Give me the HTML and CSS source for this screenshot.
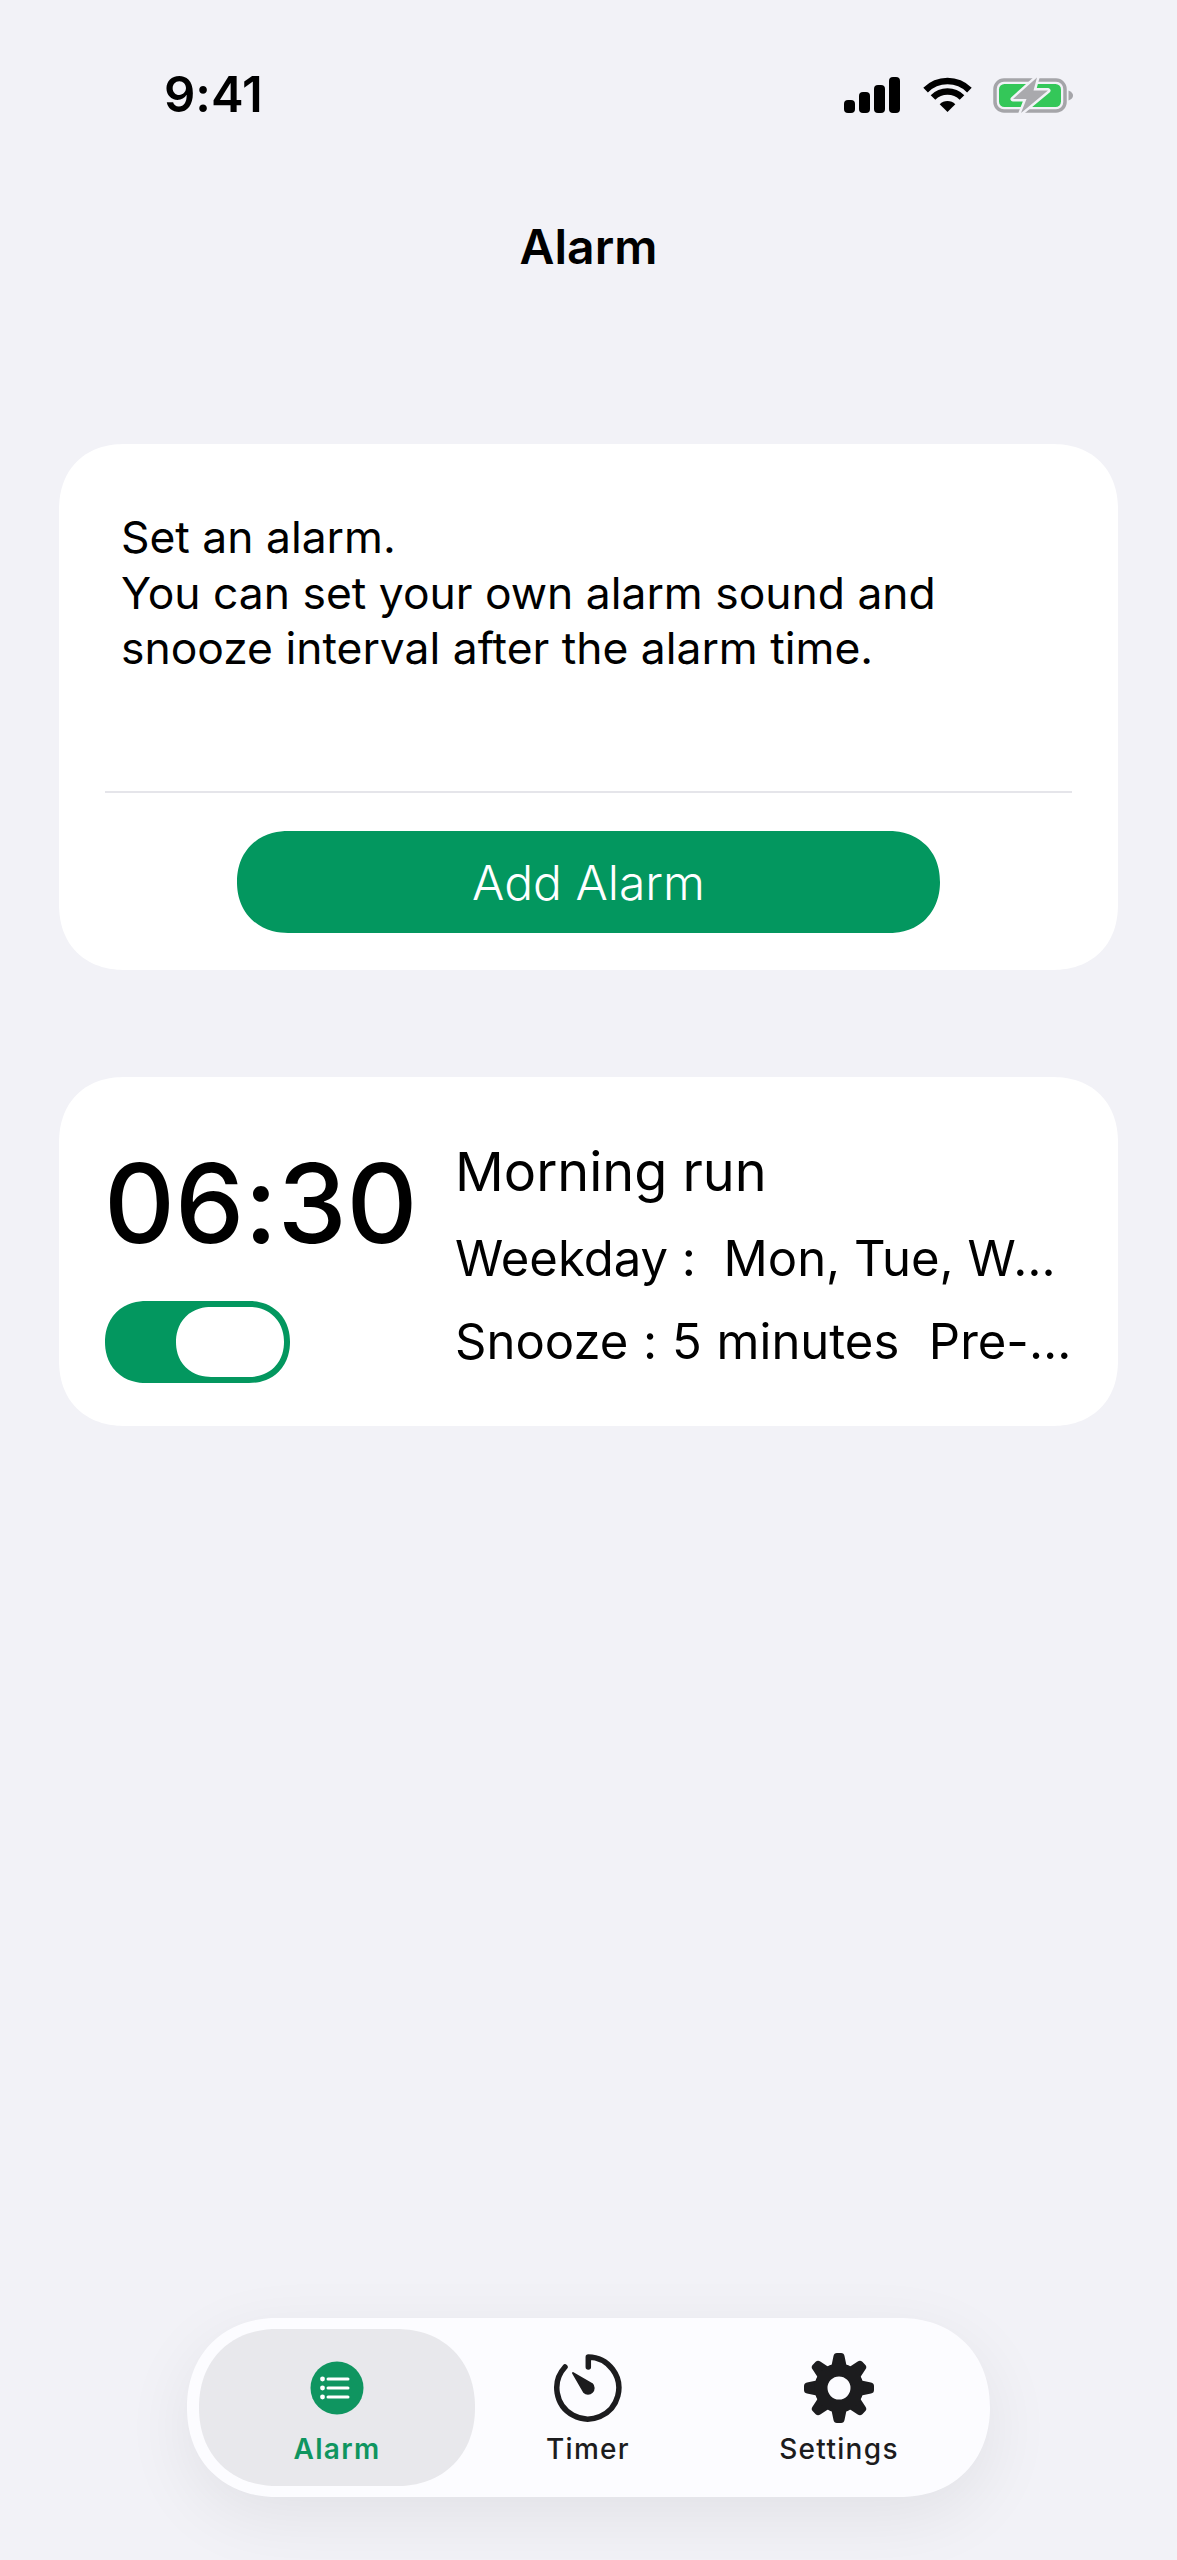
FILE: index.html
```html
<!DOCTYPE html>
<html>

<head>
  <title>Alarm</title>
  <link rel="stylesheet" href="styles.css">
</head>

<body>
  <div class="status-bar">
    <span class="status-time">9:41</span>
    <div class="status-icons">
      <svg class="icon-signal" viewBox="0 0 56 36">
        <rect x="0" y="23" width="11" height="13" rx="4"/>
        <rect x="15" y="15" width="11" height="21" rx="4"/>
        <rect x="30" y="8" width="11" height="28" rx="4"/>
        <rect x="45" y="0" width="11" height="36" rx="4"/>
      </svg>
      <svg class="icon-wifi" viewBox="0 0 49 36">
        <path class="wifi-arc" d="M2.6 13.1A31 31 0 0 1 46.4 13.1"/>
        <path class="wifi-arc" d="M10 20.5A20.5 20.5 0 0 1 39 20.5"/>
        <path d="M24.5 35L16.7 27.2A11 11 0 0 1 32.3 27.2Z"/>
      </svg>
      <svg class="icon-battery" viewBox="0 0 80 38">
        <rect class="batt-shell" x="2" y="4" width="70" height="31" rx="9"/>
        <rect class="batt-fill" x="6" y="8" width="62" height="23" rx="5.5"/>
        <path class="batt-nub" d="M75.5 14.5C78.5 15.5 80 17.5 80 19.5S78.5 23.5 75.5 24.5Z"/>
        <path class="batt-bolt" d="M44 1.5L20 23H33.5L28 37L55 14.5H40.5Z"/>
      </svg>
    </div>
  </div>

  <h1 class="page-title">Alarm</h1>

  <section class="card intro-card">
    <p class="intro-text">Set an alarm.<br>You can set your own alarm sound and<br>snooze interval after the alarm time.</p>
    <div class="divider"></div>
    <button class="add-btn">Add Alarm</button>
  </section>

  <section class="card alarm-card">
    <div class="alarm-left">
      <div class="alarm-time">06:30</div>
      <div class="toggle"><div class="toggle-knob"></div></div>
    </div>
    <div class="alarm-info">
      <div class="alarm-name">Morning run</div>
      <div class="alarm-line">Weekday :  Mon, Tue, Wed, Thu, Fri</div>
      <div class="alarm-line snooze-line">Snooze : 5 minutes  Pre-alarm : On</div>
    </div>
  </section>

  <nav class="tab-bar">
    <div class="tab-item active">
      <svg class="tab-icon" viewBox="0 0 70 70">
        <circle cx="35" cy="35" r="26.5" fill="#0f9560"/>
        <g stroke="#fff" stroke-width="3" stroke-linecap="round">
          <path d="M26 26H46"/>
          <path d="M26 35H46"/>
          <path d="M26 44H46"/>
        </g>
        <g fill="#fff">
          <circle cx="20.5" cy="26" r="2.4"/>
          <circle cx="20.5" cy="35" r="2.4"/>
          <circle cx="20.5" cy="44" r="2.4"/>
        </g>
      </svg>
      <span>Alarm</span>
    </div>
    <div class="tab-item">
      <svg class="tab-icon" viewBox="0 0 70 70">
        <g transform="translate(1 1)">
          <path d="M34.3 13V3A31 31 0 1 1 11 13" fill="none" stroke="#1c1c1e" stroke-width="5.5" stroke-linecap="round" stroke-linejoin="round"/>
          <path d="M19 19L38 30A5.6 5.6 0 0 1 30 38Z" fill="#1c1c1e" stroke="#1c1c1e" stroke-width="2" stroke-linejoin="round"/>
        </g>
      </svg>
      <span>Timer</span>
    </div>
    <div class="tab-item">
      <svg class="tab-icon" viewBox="0 0 70 70">
        <defs>
          <path id="gearTooth" d="M27 15L29.5 3Q30 0 33 0H37Q40 0 40.5 3L43 15Z"/>
        </defs>
        <g fill="#1c1c1e">
          <use href="#gearTooth"/>
          <use href="#gearTooth" transform="rotate(45 35 35)"/>
          <use href="#gearTooth" transform="rotate(90 35 35)"/>
          <use href="#gearTooth" transform="rotate(135 35 35)"/>
          <use href="#gearTooth" transform="rotate(180 35 35)"/>
          <use href="#gearTooth" transform="rotate(225 35 35)"/>
          <use href="#gearTooth" transform="rotate(270 35 35)"/>
          <use href="#gearTooth" transform="rotate(315 35 35)"/>
        </g>
        <circle cx="35" cy="35" r="18" fill="none" stroke="#1c1c1e" stroke-width="13"/>
      </svg>
      <span>Settings</span>
    </div>
  </nav>
</body>

</html>
```

FILE: styles.css
```css
html,
body {
  margin: 0;
  padding: 0;
}

body {
  min-height: 2560px;
  display: flex;
  flex-direction: column;
  font-family: Inter, "Liberation Sans", sans-serif;
  font-feature-settings: "calt" 0;
  background-color: #f2f2f7;
  color: #000;
}

/* Status bar */
.status-bar {
  display: flex;
  justify-content: space-between;
  align-items: center;
  height: 36px;
  padding: 77px 104px 0 164px;
}

.status-time {
  font-size: 49px;
  font-weight: 600;
  line-height: 36px;
}

.status-icons {
  display: flex;
  align-items: center;
  gap: 21px;
}

.status-icons svg {
  display: block;
}

.icon-signal {
  width: 56px;
  height: 36px;
  margin-right: 2px;
}

.icon-wifi {
  width: 49px;
  height: 36px;
}

.icon-battery {
  width: 80px;
  height: 38px;
}

.wifi-arc {
  fill: none;
  stroke: #000;
  stroke-width: 6.5;
}

.batt-shell {
  fill: none;
  stroke: #a5a5a9;
  stroke-width: 3.5;
}

.batt-fill {
  fill: #34c759;
}

.batt-nub {
  fill: #a5a5a9;
}

.batt-bolt {
  fill: #a9a9ad;
  stroke: #f2f2f7;
  stroke-width: 5;
  stroke-linejoin: round;
  paint-order: stroke;
}

.page-title {
  margin: 95px 0 0;
  font-size: 48px;
  font-weight: 600;
  line-height: 78px;
  text-align: center;
}

/* Cards */
.card {
  background-color: #fff;
  border-radius: 66px;
  corner-shape: superellipse(1.15);
  margin: 0 59px;
}

.intro-card {
  height: 526px;
  margin-top: 158px;
  padding: 0 46px;
  display: flex;
  flex-direction: column;
  align-items: center;
  box-sizing: border-box;
}

.intro-text {
  align-self: stretch;
  height: 240px;
  margin: 0;
  padding: 66px 16px 0;
  box-sizing: border-box;
  font-size: 44.4px;
  line-height: 55.5px;
  color: #000;
}

.divider {
  align-self: stretch;
  height: 2px;
  margin-top: 107px;
  background-color: #e5e5ea;
}

.add-btn {
  width: 703px;
  height: 102px;
  margin-top: 38px;
  border: none;
  border-radius: 51px;
  corner-shape: superellipse(1.1);
  background-color: #03975f;
  color: #fff;
  font-family: inherit;
  font-feature-settings: inherit;
  font-size: 48px;
  font-weight: 300;
}

.alarm-card {
  height: 349px;
  margin-top: 107px;
  padding: 0 46px;
  display: flex;
  box-sizing: border-box;
}

.alarm-left {
  width: 350px;
  flex-shrink: 0;
}

.alarm-time {
  margin-top: 66px;
  margin-left: -1px;
  font-size: 110px;
  line-height: 120px;
  font-weight: 500;
}

.toggle {
  width: 185px;
  height: 82px;
  margin-top: 38px;
  padding: 6px;
  box-sizing: border-box;
  border-radius: 41px;
  corner-shape: superellipse(1.1);
  background-color: #03975f;
  display: flex;
  justify-content: flex-end;
}

.toggle-knob {
  width: 108px;
  height: 70px;
  border-radius: 35px;
  corner-shape: superellipse(1.1);
  background-color: #fff;
}

.alarm-info {
  flex: 1;
  min-width: 0;
  padding-top: 60px;
}

.alarm-name {
  margin-bottom: 17px;
  font-size: 54px;
  line-height: 70px;
}

.alarm-line {
  margin-bottom: 13px;
  font-size: 49px;
  line-height: 70px;
  white-space: pre;
  overflow: hidden;
  text-overflow: ellipsis;
}

.snooze-line {
  word-spacing: 1px;
}

/* Bottom tab bar */
.tab-bar {
  display: grid;
  grid-template-columns: 276px 1fr 276px;
  width: 803px;
  height: 179px;
  margin: auto 0 63px 187px;
  padding: 11px 13px 11px 12px;
  box-sizing: border-box;
  border-radius: 90px;
  corner-shape: superellipse(1.1);
  background-color: #fcfcff;
  box-shadow: 0 20px 70px rgba(0, 0, 0, 0.07);
}

.tab-item {
  display: flex;
  flex-direction: column;
  align-items: center;
  border-radius: 78px;
  corner-shape: superellipse(1.1);
  padding-top: 24px;
  font-size: 28px;
  font-weight: 500;
  letter-spacing: 1.3px;
  color: #1c1c1e;
}

.tab-item span {
  margin-top: 6px;
  line-height: 40px;
}

.tab-item.active {
  background-color: #e8e8ec;
  color: #0f9560;
  font-weight: 600;
}

.tab-icon {
  display: block;
  width: 70px;
  height: 70px;
}
```
